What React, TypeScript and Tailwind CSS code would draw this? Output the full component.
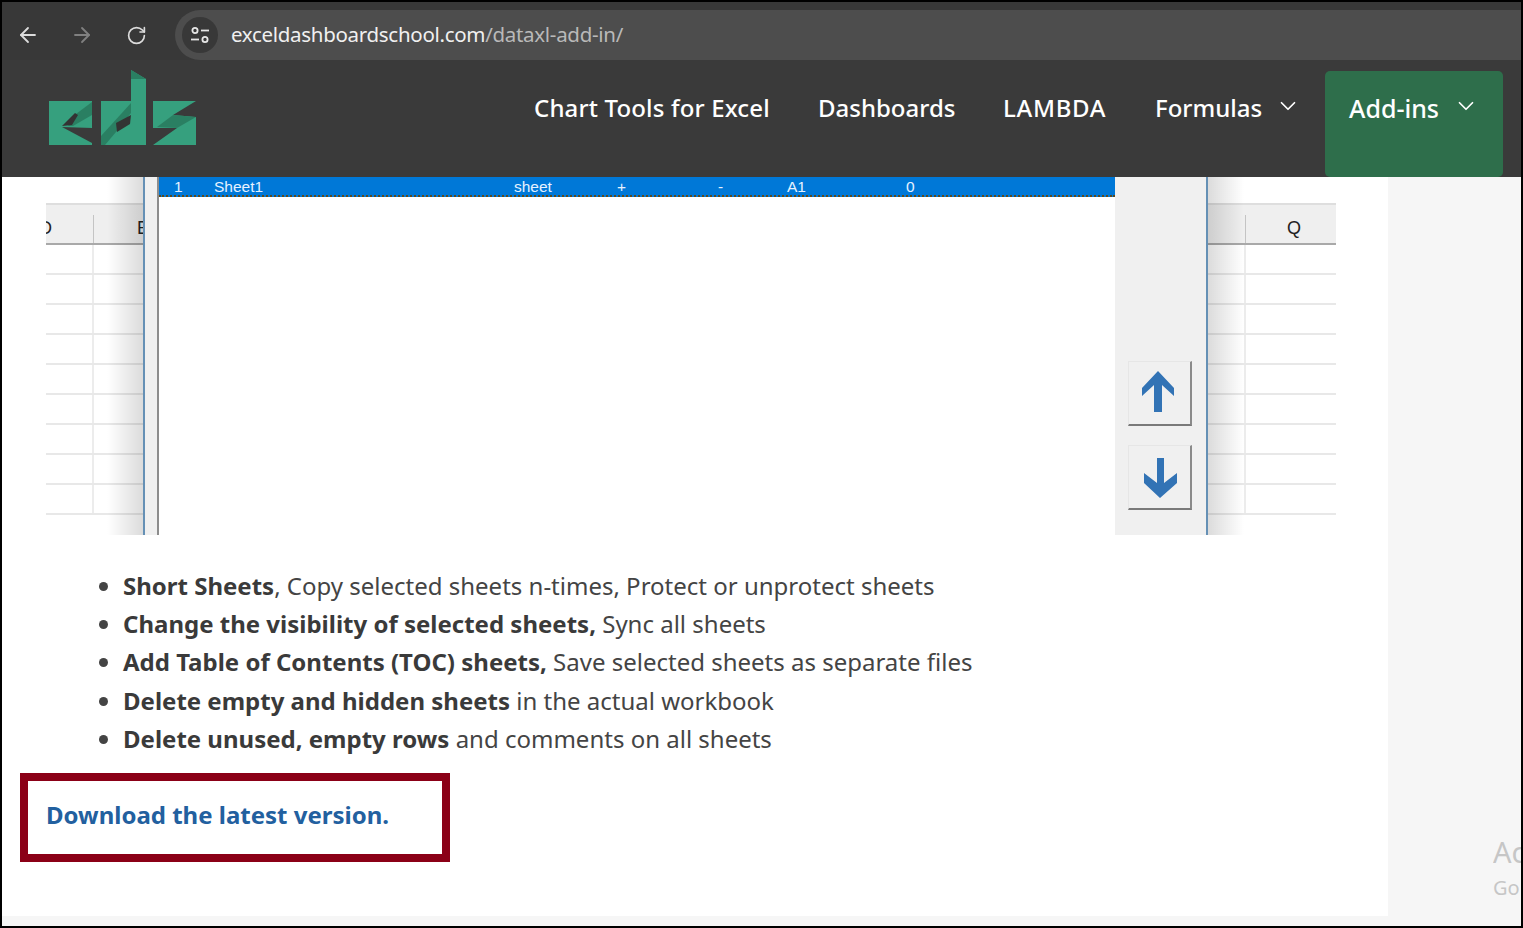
import { ArrowLeft, ArrowRight, RotateCw, ChevronDown } from "lucide-react";

const gridRows = [0, 1, 2, 3, 4, 5, 6, 7, 8];

const sheets = [
  { bold: "Short Sheets", rest: ", Copy selected sheets n-times, Protect or unprotect sheets" },
  { bold: "Change the visibility of selected sheets,", rest: " Sync all sheets" },
  { bold: "Add Table of Contents (TOC) sheets,", rest: " Save selected sheets as separate files" },
  { bold: "Delete empty and hidden sheets", rest: " in the actual workbook" },
  { bold: "Delete unused, empty rows", rest: " and comments on all sheets" },
];

function Logo() {
  return (
    <svg width="156" height="80" viewBox="45 68 156 80">
      <polygon points="49,101 92,101 92,128 62,127 92,143 92,145 49,145" fill="#36a07e" />
      <polygon points="76,114 92,102 92,115 73,126 68,126" fill="#2a7f62" />
      <polygon points="62,126 75,113 78,115 72,125" fill="#333" />
      <polygon points="101,101 131,101 131,70 146,79 146,145 101,145" fill="#36a07e" />
      <polygon points="131,70 146,79 131,79" fill="#2a7f62" />
      <polygon points="101,136 131,103 131,113 116,132 105,145 101,145" fill="#2a7f62" />
      <polygon points="116,123 131,115 130,124 117,132" fill="#333" />
      <polygon points="153,101 196,101 173,115 196,117 196,145 153,145 177,128 153,128" fill="#36a07e" />
      <polygon points="157,127 173,115 196,117 177,128" fill="#2a7f62" />
    </svg>
  );
}

function TuneIcon() {
  return (
    <svg width="20" height="20" viewBox="0 0 20 20" fill="none" stroke="#e6e6e6" strokeWidth="1.8">
      <circle cx="5" cy="5.5" r="2.6" />
      <path d="M11 5.5h8" />
      <path d="M1 14.5h8" />
      <circle cx="15" cy="14.5" r="2.6" />
    </svg>
  );
}

function NavItem({
  label,
  width,
  chevron,
  className,
}: {
  label: string;
  width: string;
  chevron?: boolean;
  className?: string;
}) {
  return (
    <a className={`flex items-center font-medium text-white leading-[34px] ${className ?? "text-[24px]"}`}>
      <span className={width}>{label}</span>
      {chevron && <ChevronDown size={26} strokeWidth={1.6} className="ml-[13px] -mt-1" />}
    </a>
  );
}

function GridStrip({ side }: { side: "left" | "right" }) {
  const left = side === "left";
  return (
    <div className={`relative ${left ? "w-[97px]" : "w-[128px]"} h-full overflow-hidden bg-white`}>
      <div className="h-[26px]" />
      <div className="flex h-[42px] bg-[#efefef] border-t-2 border-t-[#dedede] border-b-2 border-b-[#a9a9a9] text-[18px] text-[#222] font-['Liberation_Sans',sans-serif]">
        {left ? (
          <>
            <div className="w-[48px] border-r border-r-[#c4c4c4] mt-[10px] overflow-hidden">
              <span className="block -ml-[7px] leading-[26px]">D</span>
            </div>
            <div className="flex-1 flex items-center pt-[9px] pl-[43px] overflow-hidden">E</div>
          </>
        ) : (
          <>
            <div className="w-[38px] border-r border-r-[#c4c4c4] mt-[10px]" />
            <div className="flex-1 flex items-center justify-center pt-[9px] pl-[6px]">Q</div>
          </>
        )}
      </div>
      {gridRows.map((r) => (
        <div key={r} className="flex h-[30px] border-b-2 border-b-[#e8e8e8]">
          <div className={`${left ? "w-[48px]" : "w-[38px]"} border-r-2 border-r-[#ececec]`} />
        </div>
      ))}
      <div
        className={`absolute top-0 bottom-0 w-[36px] ${
          left
            ? "right-0 bg-gradient-to-l from-[#00000024] to-transparent"
            : "left-0 bg-gradient-to-r from-[#00000024] to-transparent"
        }`}
      />
    </div>
  );
}

function MoveButton({ points }: { points: string }) {
  return (
    <div className="w-[64px] h-[65px] border-r-2 border-b-2 border-r-[#8a8a8a] border-b-[#7a7a7a] border-t border-l border-t-[#e6e6e6] border-l-[#e6e6e6] bg-[#f0f0f0]">
      <svg width="62" height="62" viewBox="0 0 62 62">
        <polygon points={points} fill="#3273b5" />
      </svg>
    </div>
  );
}

function SheetDialog() {
  return (
    <div className="flex h-full flex-1 bg-[#f0f0f0] border-l-2 border-l-[#6590b5] border-r-2 border-r-[#6590b5]">
      <div className="w-[12px]" />
      <div className="w-[958px] h-full bg-white border-l-2 border-l-[#8d8d8d]">
        <div className="flex h-[20px] items-center pt-[2px] bg-[#0078d7] border-b-2 border-dotted border-b-[#5a4a20] text-[15.5px] text-[#e6f2ff] font-['Liberation_Sans',sans-serif]">
          <span className="w-[55px] pl-[15px]">1</span>
          <span className="w-[300px]">Sheet1</span>
          <span className="w-[103px]">sheet</span>
          <span className="w-[101px]">+</span>
          <span className="w-[69px]">-</span>
          <span className="w-[119px]">A1</span>
          <span>0</span>
        </div>
      </div>
      <div className="flex-1 flex flex-col items-center pr-[2px] pt-[184px] gap-[19px]">
        <MoveButton points="29,9 45,26 45,34 33,23 33,50 25,50 25,23 13,34 13,26" />
        <MoveButton points="28,12 35,12 35,37 48,27 48,37 31,52 15,37 15,27 28,37" />
      </div>
    </div>
  );
}

export default function App() {
  return (
    <div className="relative w-[1523px] h-[928px] overflow-hidden border-2 border-black bg-[#f6f6f6] font-['Noto_Sans',sans-serif] flex flex-col">
      {/* browser toolbar */}
      <div className="flex h-[58px] items-end bg-[#383838]">
        <div className="flex h-[50px] w-[173px] items-center text-[#dcdcdc]">
          <ArrowLeft size={24} strokeWidth={1.8} className="ml-[14px]" />
          <ArrowRight size={24} strokeWidth={1.8} className="ml-[30px] text-[#808080]" />
          <RotateCw size={21} strokeWidth={1.9} className="ml-[32px]" />
        </div>
        <div className="flex h-[50px] flex-1 items-center rounded-l-[25px] bg-[#4d4d4d]">
          <div className="flex h-[36px] w-[36px] ml-[7px] items-center justify-center rounded-full bg-[#383838]">
            <TuneIcon />
          </div>
          <span className="ml-[13px] -mt-[2px] text-[20.5px] tracking-[-0.3px] text-[#f0f0f0]">
            exceldashboardschool.com<span className="text-[#b9b9b9]">/dataxl-add-in/</span>
          </span>
        </div>
      </div>

      {/* site header */}
      <div className="flex h-[117px] items-start bg-[#3a3a3a]">
        <div className="pl-[43px] pt-[8px]">
          <Logo />
        </div>
        <nav className="ml-auto flex items-start">
          <div className="flex gap-[48px] pt-[31px] pr-[24px]">
            <NavItem label="Chart Tools for Excel" width="w-[236px]" className="text-[24px] tracking-[0.15px]" />
            <NavItem label="Dashboards" width="w-[137px]" />
            <NavItem label="LAMBDA" width="w-[104px]" className="text-[24px] tracking-[0.7px]" />
            <NavItem label="Formulas" width="w-[107px]" chevron />
          </div>
          <div className="mt-[11px] mr-[18px] flex h-[106px] w-[178px] items-start rounded-[5px] bg-[#2e6e4b] pl-[24px] pt-[20px]">
            <NavItem label="Add-ins" width="w-[91px]" className="text-[25px]" chevron />
          </div>
        </nav>
      </div>

      {/* article */}
      <div className="flex flex-1 min-h-0">
        <div className="w-[1386px] bg-white">
          <div className="flex h-[358px] w-[1290px] ml-[44px]">
            <GridStrip side="left" />
            <SheetDialog />
            <GridStrip side="right" />
          </div>
          <ul className="mt-[32px] ml-[101px] list-disc pl-[20px] text-[24px] leading-[38.2px] text-[#444]">
            {sheets.map((s) => (
              <li key={s.bold}>
                <b className="font-bold text-[#3a3a3a]">{s.bold}</b>
                {s.rest}
              </li>
            ))}
          </ul>
          <div className="mt-[15px] ml-[18px] flex h-[89px] w-[430px] items-center border-[8px] border-[#8b0017] pl-[18px] pb-[6px]">
            <a className="text-[24px] font-bold text-[#22609f]">Download the latest version.</a>
          </div>
        </div>
      </div>
      <div className="h-[10px] shrink-0 bg-[#f6f6f6]" />

      {/* windows watermark */}
      <div className="absolute left-[1491px] top-[830px] w-[30px] overflow-hidden text-[#c6c6c6] whitespace-nowrap">
        <div className="text-[29px] leading-[40px]">Ac</div>
        <div className="text-[20px] leading-[28px] mt-[2px]">Go</div>
      </div>
    </div>
  );
}
